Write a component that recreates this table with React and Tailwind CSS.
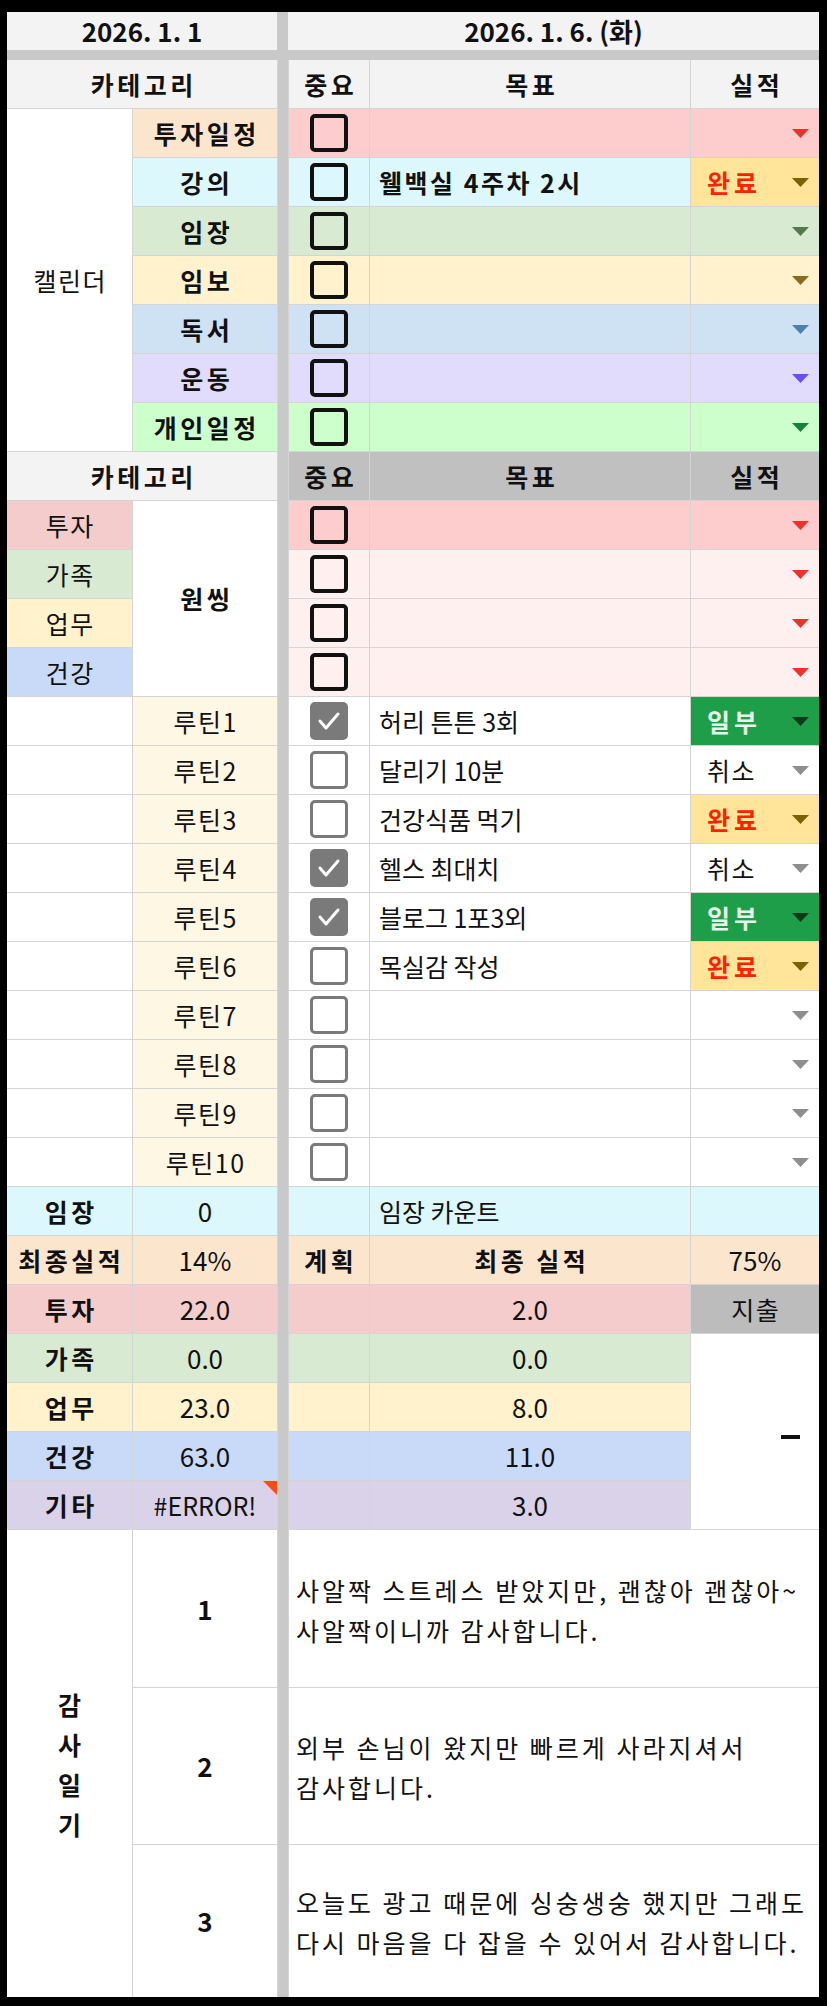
import React from "react";

const FONT = "font-['Noto_Sans_CJK_KR','Noto_Sans',sans-serif]";
const B = "font-bold tracking-[3.5px] pl-[3.5px]";
const R = "tracking-[1.5px] pl-[1.5px]";
const N = "text-[26px]";
const ctr = "flex items-center justify-center";

function Arrow({ color }) {
  return (
    <svg width="17" height="9" viewBox="0 0 17 9" className="shrink-0">
      <polygon points="0,0 17,0 8.5,9" fill={color} />
    </svg>
  );
}

function Box({ kind }) {
  if (kind === "black")
    return <div className="w-[38px] h-[38px] rounded-[5px] border-[4px] border-[#111]" />;
  if (kind === "off")
    return <div className="w-[38px] h-[38px] rounded-[5px] border-[3px] border-[#7a7a7a] bg-white" />;
  return (
    <div className="w-[38px] h-[38px] rounded-[5px] bg-[#7a7a7a] flex items-center justify-center">
      <svg width="38" height="38" viewBox="0 0 38 38">
        <polyline points="10,19 16,26 28,12" fill="none" stroke="white" strokeWidth="3" strokeLinecap="round" strokeLinejoin="round" />
      </svg>
    </div>
  );
}

const cal = [
  { label: "투자일정", lbg: "bg-[#fce5cd]", bg: "bg-[#fdcdcd]", arrow: "#e8332a" },
  { label: "강의", lbg: "bg-[#dcf8fd]", bg: "bg-[#dcf8fd]", goal: "웰백실 4주차 2시", done: true },
  { label: "임장", lbg: "bg-[#d9ead3]", bg: "bg-[#d9ead3]", arrow: "#557a4a" },
  { label: "임보", lbg: "bg-[#fff2cc]", bg: "bg-[#fff2cc]", arrow: "#8a6a1d" },
  { label: "독서", lbg: "bg-[#cfe2f3]", bg: "bg-[#cfe2f3]", arrow: "#4f7fb0" },
  { label: "운동", lbg: "bg-[#e2dcfc]", bg: "bg-[#e2dcfc]", arrow: "#6b4df5" },
  { label: "개인일정", lbg: "bg-[#ccffcc]", bg: "bg-[#ccffcc]", arrow: "#16803c" },
];

const one = [
  { label: "투자", lbg: "bg-[#f4cccc]", bg: "bg-[#fdcdcd]" },
  { label: "가족", lbg: "bg-[#d9ead3]", bg: "bg-[#fff0f0]" },
  { label: "업무", lbg: "bg-[#fff2cc]", bg: "bg-[#fff0f0]" },
  { label: "건강", lbg: "bg-[#c9daf8]", bg: "bg-[#fff0f0]" },
];

const routines = [
  { n: "루틴1", box: "on", goal: "허리 튼튼 3회", st: "일부" },
  { n: "루틴2", box: "off", goal: "달리기 10분", st: "취소" },
  { n: "루틴3", box: "off", goal: "건강식품 먹기", st: "완료" },
  { n: "루틴4", box: "on", goal: "헬스 최대치", st: "취소" },
  { n: "루틴5", box: "on", goal: "블로그 1포3외", st: "일부" },
  { n: "루틴6", box: "off", goal: "목실감 작성", st: "완료" },
  { n: "루틴7", box: "off", goal: "", st: "" },
  { n: "루틴8", box: "off", goal: "", st: "" },
  { n: "루틴9", box: "off", goal: "", st: "" },
  { n: "루틴10", box: "off", goal: "", st: "" },
];

function Status({ st }) {
  if (st === "일부")
    return (
      <div className="flex items-center justify-between pl-[16px] pr-[10px] bg-[#1f9e4a]">
        <span className="font-bold tracking-[4px] text-[#e6f7ea]">일부</span>
        <Arrow color="#0b3a18" />
      </div>
    );
  if (st === "완료")
    return (
      <div className="flex items-center justify-between pl-[16px] pr-[10px] bg-[#ffe599]">
        <span className="font-bold tracking-[4px] text-[#ff2200]">완료</span>
        <Arrow color="#7f6000" />
      </div>
    );
  if (st === "취소")
    return (
      <div className="flex items-center justify-between pl-[16px] pr-[10px] bg-white">
        <span className="tracking-[1.5px]">취소</span>
        <Arrow color="#8e8e8e" />
      </div>
    );
  return (
    <div className="flex items-center justify-end pr-[10px] bg-white">
      <Arrow color="#8e8e8e" />
    </div>
  );
}

const diary = "col-span-3 bg-white flex flex-col justify-center pl-[7px] pt-[2px] tracking-[3px] leading-[40px] whitespace-nowrap";

export default function App() {
  return (
    <div className={`w-[827px] h-[2006px] bg-black pt-[12px] pl-[7px] pr-[8px] pb-[9px] text-[25px] leading-none text-[#111] ${FONT}`}>
      <div className="flex h-[38px]">
        <div className={`w-[270px] bg-[#f3f3f3] font-bold text-[26px] ${ctr}`}>2026. 1. 1</div>
        <div className="w-[11px] bg-[#c9c9c9]" />
        <div className={`flex-1 bg-[#f3f3f3] font-bold text-[26px] ${ctr}`}>2026. 1. 6. (화)</div>
      </div>
      <div className="h-[10px] bg-[#c9c9c9]" />
      <div className="grid grid-cols-[125px_144px_10px_80px_320px_128px] grid-rows-[repeat(30,48px)_157px_156px_152px] gap-px bg-[#d4d4d4]">
        <div className="col-start-3 row-span-full bg-[#c9c9c9]" />

        {/* header 1 */}
        <div className={`col-span-2 bg-[#f3f3f3] ${B} ${ctr}`}>카테고리</div>
        <div className={`bg-[#f3f3f3] ${B} ${ctr}`}>중요</div>
        <div className={`bg-[#f3f3f3] ${B} ${ctr}`}>목표</div>
        <div className={`bg-[#f3f3f3] ${B} ${ctr}`}>실적</div>

        {/* calendar */}
        {cal.map((r, i) => (
          <React.Fragment key={r.label}>
            {i === 0 && <div className={`row-span-7 bg-white ${R} ${ctr}`}>캘린더</div>}
            <div className={`${r.lbg} ${B} ${ctr}`}>{r.label}</div>
            <div className={`${r.bg} ${ctr}`}>
              <Box kind="black" />
            </div>
            <div className={`${r.bg} flex items-center pl-[9px] font-bold tracking-[2.5px]`}>{r.goal || ""}</div>
            {r.done ? (
              <div className="flex items-center justify-between pl-[16px] pr-[10px] bg-[#ffe599]">
                <span className="font-bold tracking-[4px] text-[#ff2200]">완료</span>
                <Arrow color="#7f6000" />
              </div>
            ) : (
              <div className={`${r.bg} flex items-center justify-end pr-[10px]`}>
                <Arrow color={r.arrow} />
              </div>
            )}
          </React.Fragment>
        ))}

        {/* header 2 */}
        <div className={`col-span-2 bg-[#f3f3f3] ${B} ${ctr}`}>카테고리</div>
        <div className={`bg-[#c0c0c0] ${B} ${ctr}`}>중요</div>
        <div className={`bg-[#c0c0c0] ${B} ${ctr}`}>목표</div>
        <div className={`bg-[#c0c0c0] ${B} ${ctr}`}>실적</div>

        {/* one thing */}
        {one.map((r, i) => (
          <React.Fragment key={r.label}>
            <div className={`${r.lbg} ${R} ${ctr}`}>{r.label}</div>
            {i === 0 && <div className={`row-span-4 bg-white ${B} ${ctr}`}>원씽</div>}
            <div className={`${r.bg} ${ctr}`}>
              <Box kind="black" />
            </div>
            <div className={r.bg} />
            <div className={`${r.bg} flex items-center justify-end pr-[10px]`}>
              <Arrow color="#f0302a" />
            </div>
          </React.Fragment>
        ))}

        {/* routines */}
        {routines.map((r) => (
          <React.Fragment key={r.n}>
            <div className="bg-white" />
            <div className={`bg-[#fef7e4] ${R} ${ctr}`}>{r.n}</div>
            <div className={`bg-white ${ctr}`}>
              <Box kind={r.box} />
            </div>
            <div className="bg-white flex items-center pl-[9px]">{r.goal}</div>
            <Status st={r.st} />
          </React.Fragment>
        ))}

        {/* 임장 */}
        <div className={`bg-[#dcf8fd] ${B} ${ctr}`}>임장</div>
        <div className={`bg-[#dcf8fd] ${N} ${ctr}`}>0</div>
        <div className="bg-[#dcf8fd]" />
        <div className="bg-[#dcf8fd] flex items-center pl-[9px]">임장 카운트</div>
        <div className="bg-[#dcf8fd]" />

        {/* 최종실적 */}
        <div className={`bg-[#fce5cd] font-bold tracking-[3.5px] pl-[3.5px] ${ctr}`}>최종실적</div>
        <div className={`bg-[#fce5cd] ${N} ${ctr}`}>14%</div>
        <div className={`bg-[#fce5cd] ${B} ${ctr}`}>계획</div>
        <div className={`bg-[#fce5cd] ${B} ${ctr}`}>최종 실적</div>
        <div className={`bg-[#fce5cd] ${N} ${ctr}`}>75%</div>

        {/* 투자 */}
        <div className={`bg-[#f4cccc] ${B} ${ctr}`}>투자</div>
        <div className={`bg-[#f4cccc] ${N} ${ctr}`}>22.0</div>
        <div className="bg-[#f4cccc]" />
        <div className={`bg-[#f4cccc] ${N} ${ctr}`}>2.0</div>
        <div className={`bg-[#bcbcbc] ${R} ${ctr}`}>지출</div>

        {/* 가족 */}
        <div className={`bg-[#d9ead3] ${B} ${ctr}`}>가족</div>
        <div className={`bg-[#d9ead3] ${N} ${ctr}`}>0.0</div>
        <div className="bg-[#d9ead3]" />
        <div className={`bg-[#d9ead3] ${N} ${ctr}`}>0.0</div>
        <div className="row-span-4 bg-white flex items-center justify-end pr-[19px] pt-[10px]">
          <div className="w-[19px] h-[4px] bg-[#111]" />
        </div>

        {/* 업무 */}
        <div className={`bg-[#fff2cc] ${B} ${ctr}`}>업무</div>
        <div className={`bg-[#fff2cc] ${N} ${ctr}`}>23.0</div>
        <div className="bg-[#fff2cc]" />
        <div className={`bg-[#fff2cc] ${N} ${ctr}`}>8.0</div>

        {/* 건강 */}
        <div className={`bg-[#c9daf8] ${B} ${ctr}`}>건강</div>
        <div className={`bg-[#c9daf8] ${N} ${ctr}`}>63.0</div>
        <div className="bg-[#c9daf8]" />
        <div className={`bg-[#c9daf8] ${N} ${ctr}`}>11.0</div>

        {/* 기타 */}
        <div className={`bg-[#d9d2e9] ${B} ${ctr}`}>기타</div>
        <div className={`relative bg-[#d9d2e9] ${ctr}`}>
          #ERROR!
          <svg width="14" height="14" viewBox="0 0 14 14" className="absolute top-0 right-0">
            <polygon points="0,0 14,0 14,14" fill="#ff4a1c" />
          </svg>
        </div>
        <div className="bg-[#d9d2e9]" />
        <div className={`bg-[#d9d2e9] ${N} ${ctr}`}>3.0</div>

        {/* 감사일기 */}
        <div className="row-span-3 bg-white font-bold flex flex-col items-center justify-center leading-[40px]">
          <span>감</span>
          <span>사</span>
          <span>일</span>
          <span>기</span>
        </div>
        <div className={`bg-white font-bold ${N} ${ctr}`}>1</div>
        <div className={diary}>
          <span>사알짝 스트레스 받았지만, 괜찮아 괜찮아~</span>
          <span>사알짝이니까 감사합니다.</span>
        </div>
        <div className={`bg-white font-bold ${N} ${ctr}`}>2</div>
        <div className={diary}>
          <span>외부 손님이 왔지만 빠르게 사라지셔서</span>
          <span>감사합니다.</span>
        </div>
        <div className={`bg-white font-bold ${N} ${ctr}`}>3</div>
        <div className={diary}>
          <span>오늘도 광고 때문에 싱숭생숭 했지만 그래도</span>
          <span>다시 마음을 다 잡을 수 있어서 감사합니다.</span>
        </div>
      </div>
    </div>
  );
}
